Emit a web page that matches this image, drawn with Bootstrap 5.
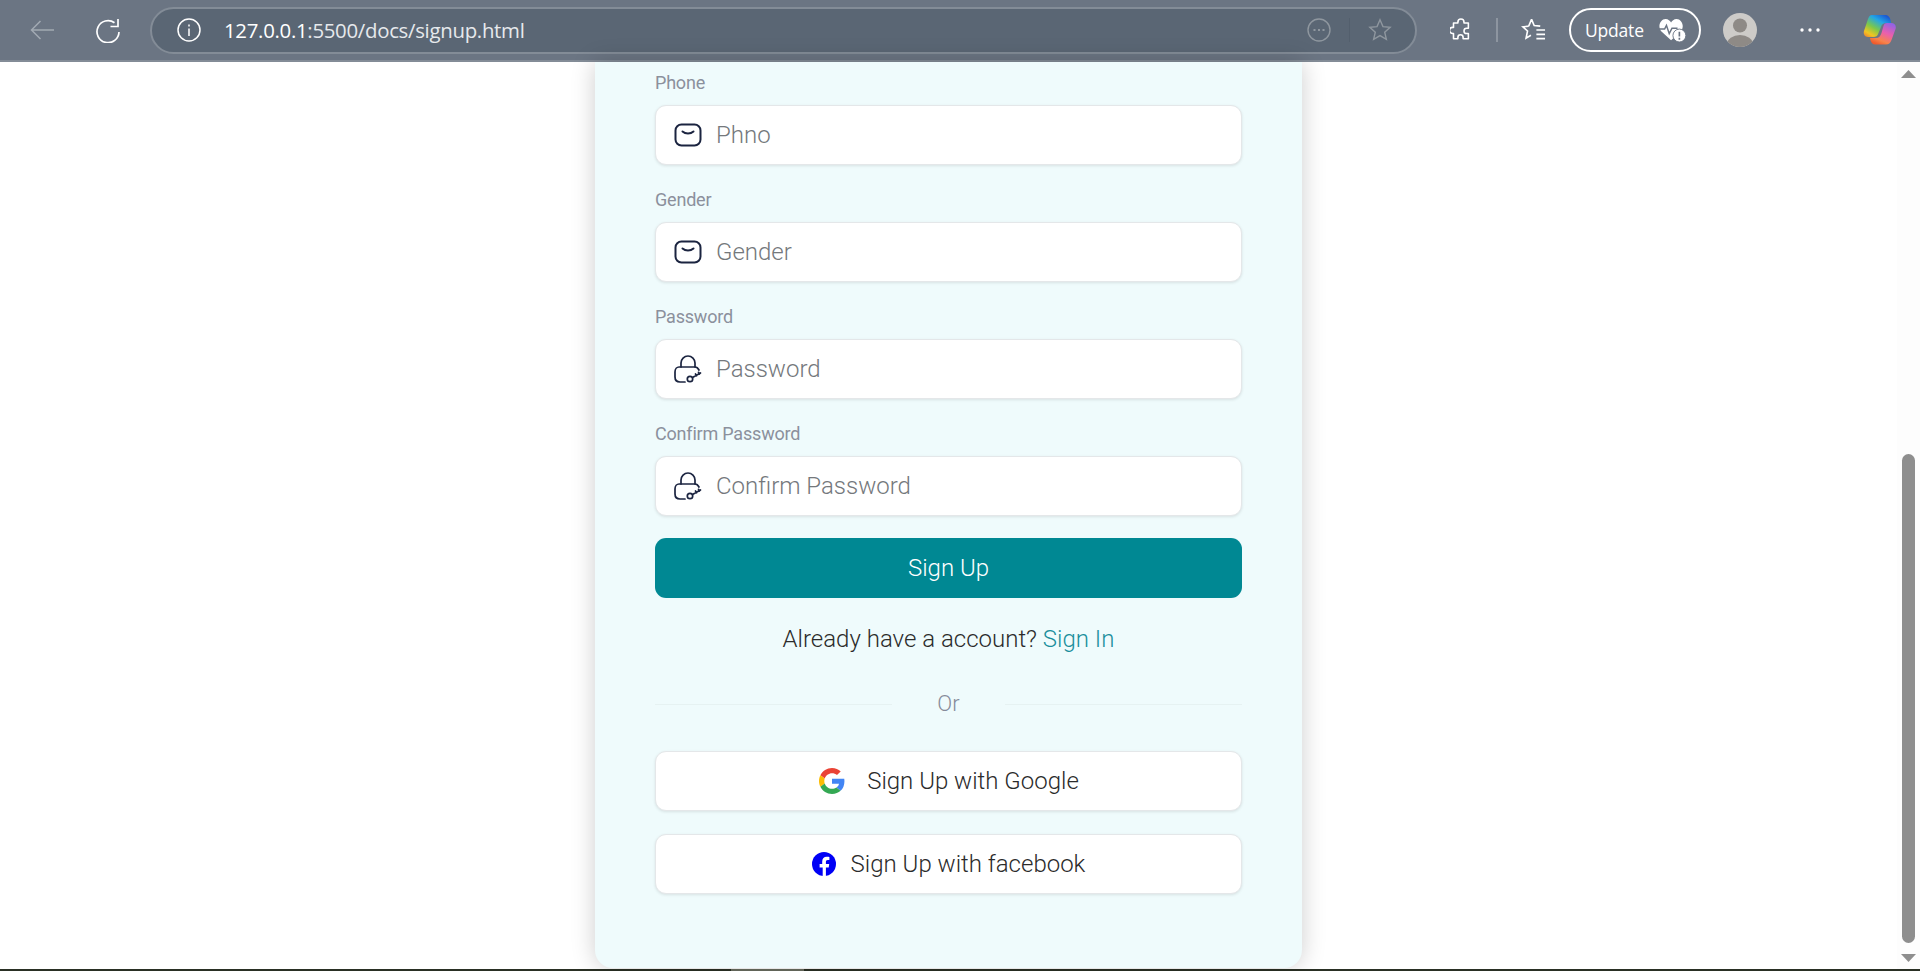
<!DOCTYPE html>
<html lang="en">
<head>
<meta charset="utf-8">
<title>Sign Up</title>
<link href="https://cdn.jsdelivr.net/npm/bootstrap@5.3.0/dist/css/bootstrap.min.css" rel="stylesheet">
<style>
html,body{height:971px;overflow:hidden;background:#fff}
body{font-family:Roboto,"Liberation Sans",sans-serif;font-weight:300}
.chrome-bar{height:62px;background:#6b7583;border-bottom:2px solid #838c97;padding-left:30px;color:#fff}
.chrome-ico{flex:none;display:block}
.refresh-ico{margin-left:42px}
.addr-pill{width:1267px;height:47px;margin-left:30px;margin-right:33px;border:2px solid #838c97;border-radius:24px;background:#5a6674;padding-left:25px;padding-right:23px}
.addr-url{font:400 20.400px "Open Sans","Noto Sans",sans-serif;letter-spacing:-.3px;color:#e6e9ec;margin-left:23px}
.addr-url b{font-weight:400;color:#fff}
.addr-div{width:1px;height:24px;background:#535f6d;margin:0 18px}
.tool-sep{width:2px;height:24px;background:#8d95a0;margin:0 23px 0 25px}
.update-pill{width:132px;height:44px;margin-left:23px;border:2px solid #fff;border-radius:22px;padding-left:14px;font:400 17.500px "Open Sans","Noto Sans",sans-serif;letter-spacing:-.2px}
.heart-ico{margin-left:auto;margin-right:13px}
.avatar-ico{margin-left:22px}
.dots-ico{margin-left:43px}
.copilot-ico{margin-left:43px}
.page-pane{height:907px}
.page-area{min-width:0;padding-left:595px}
.signup-panel{width:707px;height:906px;background:#effbfc;border-radius:0 0 18px 18px;box-shadow:0 0 24px rgba(0,0,0,.2);padding:9px 60px 0}
.fld-label{display:block;font-weight:400;font-size:18px;line-height:24px;letter-spacing:-.2px;color:#8b909c;margin-bottom:10px}
.fld-group{margin-bottom:23px}
.fld-group:last-of-type{margin-bottom:22px}
.fld-box{height:60px;background:#fff;border:1px solid #e4e7e9;border-radius:11px;box-shadow:0 1px 3px rgba(0,0,0,.1);padding-left:18px}
.fld-box .form-control{border:0;background:transparent;box-shadow:none;height:58px;padding:0 0 0 14px;font-size:24px;font-weight:300;color:#333;border-radius:11px}
.fld-box .form-control::placeholder{color:#74787c;opacity:1}
.btn-signup{height:60px;background:#008893;border:0;border-radius:11px;color:#fff;font-size:24px;font-weight:300;padding:0}
.btn-signup:hover{background:#008893;color:#fff}
.have-acct{margin-top:23px;height:36px;line-height:36px;font-size:24px;color:#2b2b2b}
.have-acct a{color:#1b8f9c;text-decoration:none}
.or-row{margin-top:29px;height:36px;color:#868b9a;font-size:22px}
.or-line{height:1px;background:#e6f2f2;flex:1}
.or-word{width:113px;text-align:center;padding-bottom:2px}
.btn-social{height:60px;margin-top:29px;background:#fff;border:1px solid #e4e7e9;border-radius:11px;box-shadow:0 1px 3px rgba(0,0,0,.1);font-size:24px;font-weight:300;color:#2b2b2b;padding:0}
.btn-social:hover{background:#fff;color:#2b2b2b;border-color:#e4e7e9}
.btn-social.second{margin-top:23px}
.g-gap{margin-right:22px;margin-left:1px}
.f-gap{margin-right:15px}
.scroll-track{width:23px;background:#fdfdfd;padding:8px 0 7px}
.scroll-arrow{display:block;margin:0 auto}
.scroll-space{height:376px;flex:none}
.scroll-thumb{width:13px;height:489px;background:#8e8e8e;border-radius:7px;margin:0 auto 11px;flex:none}
.taskbar-edge{height:2px;background:#2a3024}
.taskbar-piece{width:73px;height:2px;margin-left:731px;background:#6a6e60}
</style>
</head>
<body>
<header class="chrome-bar d-flex align-items-center">
  <svg class="chrome-ico" width="24" height="20" viewBox="0 0 24 20" fill="none" stroke="#a2aab3" stroke-width="1.500"><path d="M24 10H1.500M10.500 1 1.500 10l9 9"/></svg>
  <svg class="chrome-ico refresh-ico" width="24" height="25" viewBox="0 0 24 25" fill="none" stroke="#fff" stroke-width="1.700"><path d="M23 14A11 11 0 1 1 18.500 4.800M22 1v7.500h-7.500"/></svg>
  <div class="addr-pill d-flex align-items-center">
    <svg class="chrome-ico" width="24" height="24" viewBox="0 0 24 24" fill="none" stroke="#fff" stroke-width="1.500"><circle cx="12" cy="12" r="11"/><path d="M12 10.500V18M12 6.500v2"/></svg>
    <span class="addr-url"><b>127.0.0.1</b>:5500/docs/signup.html</span>
    <svg class="chrome-ico ms-auto" width="24" height="24" viewBox="0 0 24 24" fill="none" stroke="#8f979f" stroke-width="1.400"><circle cx="12" cy="12" r="11"/><path d="M6.500 12h2M11 12h2M15.500 12h2" stroke-width="2"/></svg>
    <span class="addr-div"></span>
    <svg class="chrome-ico" width="24" height="24" viewBox="0 0 26 26" fill="none" stroke="#8f979f" stroke-width="1.500"><path d="m13 2 3.200 7.300 7.800.8-5.900 5.200 1.800 7.700-6.900-4-6.900 4 1.800-7.700L2 10.100l7.800-.8z"/></svg>
  </div>
  <svg class="chrome-ico" width="21" height="24" viewBox="0 0 24 26" fill="none" stroke="#fff" stroke-width="1.800"><path d="M9 4a3.500 3.500 0 0 1 7 0v1h5v6h-2a3 3 0 0 0 0 6h2v6h-6v-1.500a3 3 0 0 0-6 0V23H4v-6H3a3.500 3.500 0 0 1 0-7h1V5h5z" stroke-linejoin="round"/></svg>
  <span class="tool-sep"></span>
  <svg class="chrome-ico" width="25" height="26" viewBox="0 0 26 26" fill="none" stroke="#fff" stroke-width="1.700"><path d="m11 2 2.700 6.300L20 9M8 9 2 9.700l4.800 4.300-1.500 7.500 5-3M8 9l3-7M16 13h9M16 17.500h9M16 22h9"/></svg>
  <div class="update-pill d-flex align-items-center">Update
    <svg class="chrome-ico heart-ico" width="28" height="24" viewBox="0 0 30 26"><path d="M14 24 3 14C-1 8 3 1 8 1c3 0 5 2 6 4 1-2 3-4 6-4 5 0 9 7 5 13z" fill="#fff"/><path d="M0 12h7l2-4 3 9 3-6h6" fill="none" stroke="#6b7583" stroke-width="1.600"/><circle cx="23" cy="19" r="7" fill="#fff" stroke="#6b7583"/><path d="M23 15v5M23 21.500v2" stroke="#6b7583" stroke-width="1.800"/></svg>
  </div>
  <svg class="chrome-ico avatar-ico" width="34" height="34" viewBox="0 0 34 34"><defs><clipPath id="av"><circle cx="17" cy="17" r="17"/></clipPath></defs><circle cx="17" cy="17" r="17" fill="#cdcbc8"/><g clip-path="url(#av)" fill="#8e8a86"><circle cx="17" cy="12.500" r="7"/><ellipse cx="17" cy="31" rx="13" ry="9"/></g></svg>
  <svg class="chrome-ico dots-ico" width="20" height="4" viewBox="0 0 20 4" fill="#fff"><circle cx="2" cy="2" r="1.700"/><circle cx="10" cy="2" r="1.700"/><circle cx="18" cy="2" r="1.700"/></svg>
  <svg class="chrome-ico copilot-ico" width="33" height="32" viewBox="0 0 33 32"><defs><linearGradient id="cpa" x1=".85" y1="0" x2=".1" y2="1"><stop offset="0" stop-color="#1a4fd0"/><stop offset=".3" stop-color="#22a6e6"/><stop offset=".6" stop-color="#7cc84a"/><stop offset=".85" stop-color="#f2c522"/><stop offset="1" stop-color="#ef8a2e"/></linearGradient><linearGradient id="cpb" x1=".8" y1="0" x2=".3" y2="1"><stop offset="0" stop-color="#8f63e6"/><stop offset=".45" stop-color="#ea5fae"/><stop offset=".8" stop-color="#f7844a"/><stop offset="1" stop-color="#f05a2c"/></linearGradient></defs><path d="M24 9h4c4 0 5.500 3 4.500 6l-4 11c-1 3-3 4.500-5.500 4.500H12c-3 0-4.500-3-5-6.500h6c3 0 4.500-2 5.500-5l2-7c.5-2 1.500-3 3.500-3z" fill="url(#cpb)"/><path d="M9 1h13c3 0 5 2 5.500 5l.5 3h-5c-2.500 0-4 1-5 4l-2.500 6c-1 3-2.500 4-5.500 4H5c-3 0-5-3-4-6L5 5c1-2.500 2-4 4-4z" fill="url(#cpa)"/></svg>
</header>

<div class="page-pane d-flex">
  <main class="page-area flex-grow-1 d-flex">
    <section class="signup-panel">
      <form>
        <div class="fld-group">
          <label class="fld-label" for="fPhone">Phone</label>
          <div class="fld-box d-flex align-items-center">
            <svg width="28" height="24" viewBox="0 0 28 24" fill="none" stroke="#1b2440" stroke-width="2" class="flex-shrink-0"><rect x="1.500" y="1.500" width="25" height="21" rx="6"/><path d="M8.500 8.500c3 2.600 8 2.600 11 0" stroke-linecap="round"/></svg>
            <input id="fPhone" class="form-control" placeholder="Phno">
          </div>
        </div>
        <div class="fld-group">
          <label class="fld-label" for="fGender">Gender</label>
          <div class="fld-box d-flex align-items-center">
            <svg width="28" height="24" viewBox="0 0 28 24" fill="none" stroke="#1b2440" stroke-width="2" class="flex-shrink-0"><rect x="1.500" y="1.500" width="25" height="21" rx="6"/><path d="M8.500 8.500c3 2.600 8 2.600 11 0" stroke-linecap="round"/></svg>
            <input id="fGender" class="form-control" placeholder="Gender">
          </div>
        </div>
        <div class="fld-group">
          <label class="fld-label" for="fPass">Password</label>
          <div class="fld-box d-flex align-items-center">
            <svg width="28" height="28" viewBox="0 0 28 28" fill="none" stroke="#1b2440" stroke-width="1.700" class="flex-shrink-0" stroke-linecap="round"><path d="M7 12V8a7 7 0 0 1 14 0v4"/><path d="M11 27H6c-3 0-5-2-5-5v-5c0-3 2-5 4-5h16c2 0 3 1 4 3"/><circle cx="16" cy="24" r="2.700"/><path d="m18.500 22.500 8-4.500M22.500 20.800l-1-1.800M25.500 19l-1-1.700"/></svg>
            <input id="fPass" class="form-control" placeholder="Password">
          </div>
        </div>
        <div class="fld-group">
          <label class="fld-label" for="fConfirm">Confirm Password</label>
          <div class="fld-box d-flex align-items-center">
            <svg width="28" height="28" viewBox="0 0 28 28" fill="none" stroke="#1b2440" stroke-width="1.700" class="flex-shrink-0" stroke-linecap="round"><path d="M7 12V8a7 7 0 0 1 14 0v4"/><path d="M11 27H6c-3 0-5-2-5-5v-5c0-3 2-5 4-5h16c2 0 3 1 4 3"/><circle cx="16" cy="24" r="2.700"/><path d="m18.500 22.500 8-4.500M22.500 20.800l-1-1.800M25.500 19l-1-1.700"/></svg>
            <input id="fConfirm" class="form-control" placeholder="Confirm Password">
          </div>
        </div>
        <button type="button" class="btn btn-signup w-100 d-block">Sign Up</button>
      </form>
      <p class="have-acct text-center mb-0">Already have a account? <a href="#">Sign In</a></p>
      <div class="or-row d-flex align-items-center"><span class="or-line"></span><span class="or-word">Or</span><span class="or-line"></span></div>
      <button type="button" class="btn btn-social w-100 d-flex align-items-center justify-content-center">
        <svg class="g-gap" width="26" height="26" viewBox="0 0 48 48"><path fill="#EA4335" d="M24 9.500c3.540 0 6.710 1.220 9.210 3.600l6.850-6.850C35.900 2.380 30.470 0 24 0 14.620 0 6.510 5.380 2.560 13.220l7.980 6.190C12.430 13.720 17.740 9.500 24 9.500z"/><path fill="#4285F4" d="M46.980 24.550c0-1.570-.15-3.090-.38-4.550H24v9.020h12.940c-.58 2.960-2.260 5.480-4.780 7.180l7.730 6c4.510-4.180 7.090-10.360 7.090-17.650z"/><path fill="#FBBC05" d="M10.530 28.590c-.48-1.450-.76-2.990-.76-4.590s.27-3.140.76-4.590l-7.980-6.190C.92 16.460 0 20.120 0 24c0 3.880.92 7.540 2.560 10.780l7.970-6.190z"/><path fill="#34A853" d="M24 48c6.480 0 11.930-2.130 15.890-5.810l-7.730-6c-2.150 1.450-4.920 2.300-8.160 2.300-6.260 0-11.570-4.220-13.470-9.910l-7.980 6.190C6.510 42.620 14.620 48 24 48z"/></svg>
        Sign Up with Google
      </button>
      <button type="button" class="btn btn-social second w-100 d-flex align-items-center justify-content-center">
        <svg class="f-gap" width="24" height="24" viewBox="0 0 24 24"><circle cx="12" cy="12" r="12" fill="#0000f5"/><path fill="#fff" d="M16.700 15.500l.5-3.500h-3.300V9.800c0-1 .5-1.900 2-1.900h1.500V5c0 0-1.400-.2-2.700-.2-2.700 0-4.500 1.700-4.500 4.600V12H7.600v3.500h3.100V24h3.200v-8.500z"/></svg>
        Sign Up with facebook
      </button>
    </section>
  </main>
  <aside class="scroll-track d-flex flex-column flex-shrink-0">
    <svg class="scroll-arrow flex-shrink-0" width="15" height="8" viewBox="0 0 15 8"><path d="M0 8 7.500 0 15 8z" fill="#8e8e8e"/></svg>
    <div class="scroll-space"></div>
    <div class="scroll-thumb"></div>
    <svg class="scroll-arrow flex-shrink-0" width="15" height="8" viewBox="0 0 15 8"><path d="M0 0h15L7.500 8z" fill="#8e8e8e"/></svg>
  </aside>
</div>
<div class="taskbar-edge"><div class="taskbar-piece"></div></div>
<script src="https://cdn.jsdelivr.net/npm/bootstrap@5.3.0/dist/js/bootstrap.bundle.min.js"></script>
</body>
</html>
